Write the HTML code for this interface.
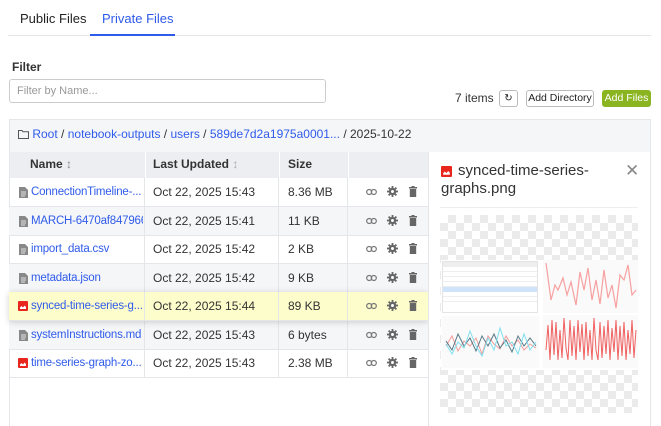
<!DOCTYPE html>
<html><head><meta charset="utf-8"><style>
*{box-sizing:border-box;margin:0;padding:0}
body{width:661px;height:426px;overflow:hidden;background:#fff;font-family:"Liberation Sans",sans-serif;font-size:12px;color:#333;position:relative}
.abs{position:absolute}
.tab{position:absolute;top:11px;font-size:13px}
a{color:#2f5bea;text-decoration:none}
.btn{position:absolute;top:90px;height:17px;border:1px solid #bbb;border-radius:3px;font-size:10.5px;line-height:15px;text-align:center;background:#fff;color:#222;white-space:nowrap;overflow:hidden}
.row{position:absolute;left:9px;width:419px;height:29px;border-bottom:1px solid #e4e6ea;line-height:28px}
.row span{position:absolute;white-space:nowrap}
.c1{left:22px;font-size:11.5px;letter-spacing:-0.2px;width:112px;overflow:hidden}.c2{left:144px;color:#333}.c3{left:279px;color:#333}
.alt{background:#f5f6f8}
.hl{background:#fdfccb;box-shadow:0 1px 6px rgba(0,0,0,.18);z-index:2}
.vl{position:absolute;top:0;bottom:0;width:1px;background:#e4e6ea}
.ic{position:absolute;top:9px}
.chk{background-color:#fff;background-image:conic-gradient(#ebebeb 25%,#fff 0 50%,#ebebeb 0 75%,#fff 0);background-size:16px 16px}
</style></head><body>
<svg width="0" height="0" style="position:absolute">
<defs>
<symbol id="doc" viewBox="0 0 9 11"><path d="M0 0h6l3 3v8H0z" fill="#888"/><path d="M2 5h5M2 7h5M2 9h4" stroke="#fff" stroke-width=".8"/></symbol>
<symbol id="img" viewBox="0 0 10 10"><rect width="10" height="10" rx="1" fill="#e8261e"/><path d="M2 8V6.5l1.5-1.5 1.5 1.5 1.5-2 1.5 1.5V8z" fill="#fff"/></symbol>
<symbol id="lnk" viewBox="0 0 11 8"><rect x=".7" y="1.5" width="5" height="5" rx="2.5" fill="none" stroke="#777" stroke-width="1.2"/><rect x="5.3" y="1.5" width="5" height="5" rx="2.5" fill="none" stroke="#777" stroke-width="1.2"/></symbol>
<symbol id="gear" viewBox="0 0 12 12"><g fill="#666"><circle cx="6" cy="6" r="4"/><rect x="5" y="0" width="2" height="12"/><rect x="0" y="5" width="12" height="2"/><rect x="5" y="0" width="2" height="12" transform="rotate(45 6 6)"/><rect x="5" y="0" width="2" height="12" transform="rotate(-45 6 6)"/></g><circle cx="6" cy="6" r="1.6" fill="#fff"/></symbol>
<symbol id="trash" viewBox="0 0 8 11"><rect x="0" y="1" width="8" height="1.5" fill="#666"/><rect x="2.5" y="0" width="3" height="1.5" fill="#666"/><rect x=".8" y="3" width="6.4" height="8" fill="#666"/></symbol>
</defs></svg>

<div class="tab" style="left:20px;color:#222">Public Files</div>
<div class="tab" style="left:102px;color:#2f5bea">Private Files</div>
<div class="abs" style="left:8px;top:35px;width:643px;height:1px;background:#e6e6e6"></div>
<div class="abs" style="left:90px;top:34px;width:85px;height:2px;background:#2f5bea"></div>

<div class="abs" style="left:12px;top:60px;font-weight:bold;font-size:12px;color:#333">Filter</div>
<div class="abs" style="left:9px;top:79px;width:317px;height:24px;border:1px solid #ccc;border-radius:3px;padding-left:7px;line-height:22px;font-size:11px;color:#999">Filter by Name...</div>

<div class="abs" style="left:455px;top:91px;font-size:12px;color:#333">7 items</div>
<div class="btn" style="left:499px;width:19px;font-size:10px">&#x21bb;</div>
<div class="btn" style="left:526px;width:68px">Add Directory</div>
<div class="btn" style="left:602px;width:49px;background:#8ab520;border-color:#8ab520;color:#fff">Add Files</div>

<div class="abs" style="left:9px;top:119px;width:642px;height:307px;border:1px solid #e4e6ea;border-bottom:none"></div>
<div class="abs" style="left:10px;top:120px;width:640px;height:32px;background:#f5f6f8;line-height:29px;padding-left:8px;white-space:nowrap;font-size:12px">
<svg width="11" height="9" viewBox="0 0 11 9" style="vertical-align:-1px"><path d="M.5 .5h3.5l1 1.2h5.5v6.8H.5z" fill="none" stroke="#555"/></svg>
<a>Root</a> / <a>notebook-outputs</a> / <a>users</a> / <a>589de7d2a1975a0001...</a> / 2025-10-22</div>

<div class="abs" style="left:10px;top:152px;width:418px;height:26px;background:#eceef1;font-weight:bold;line-height:24px">
<span class="abs" style="left:20px">Name <span style="color:#888;font-weight:normal">&#x2195;</span></span>
<span class="abs" style="left:143px">Last Updated <span style="color:#aaa;font-weight:normal">&#x2195;</span></span>
<span class="abs" style="left:278px">Size</span>
<div class="vl" style="left:135px;background:#fff"></div><div class="vl" style="left:269px;background:#fff"></div><div class="vl" style="left:338px;background:#fff"></div>
</div>

<div class="row" style="top:178px"><svg class="ic" width="9" height="11" style="left:10px"><use href="#doc"/></svg><span class="c1"><a>ConnectionTimeline-...</a></span><span class="c2">Oct 22, 2025 15:43</span><span class="c3">8.36 MB</span><div class="vl" style="left:135px"></div><div class="vl" style="left:269px"></div><div class="vl" style="left:338px"></div><svg class="ic" style="left:357px;top:10px" width="11" height="8"><use href="#lnk"/></svg><svg class="ic" style="left:378px;top:8px" width="11" height="11"><use href="#gear"/></svg><svg class="ic" style="left:400px;top:8px" width="8" height="11"><use href="#trash"/></svg></div>

<div class="row alt" style="top:206.5px"><svg class="ic" width="9" height="11" style="left:10px"><use href="#doc"/></svg><span class="c1"><a>MARCH-6470af847966...</a></span><span class="c2">Oct 22, 2025 15:41</span><span class="c3">11 KB</span><div class="vl" style="left:135px"></div><div class="vl" style="left:269px"></div><div class="vl" style="left:338px"></div><svg class="ic" style="left:357px;top:10px" width="11" height="8"><use href="#lnk"/></svg><svg class="ic" style="left:378px;top:8px" width="11" height="11"><use href="#gear"/></svg><svg class="ic" style="left:400px;top:8px" width="8" height="11"><use href="#trash"/></svg></div>

<div class="row" style="top:235px"><svg class="ic" width="9" height="11" style="left:10px"><use href="#doc"/></svg><span class="c1"><a>import_data.csv</a></span><span class="c2">Oct 22, 2025 15:42</span><span class="c3">2 KB</span><div class="vl" style="left:135px"></div><div class="vl" style="left:269px"></div><div class="vl" style="left:338px"></div><svg class="ic" style="left:357px;top:10px" width="11" height="8"><use href="#lnk"/></svg><svg class="ic" style="left:378px;top:8px" width="11" height="11"><use href="#gear"/></svg><svg class="ic" style="left:400px;top:8px" width="8" height="11"><use href="#trash"/></svg></div>

<div class="row alt" style="top:263.5px"><svg class="ic" width="9" height="11" style="left:10px"><use href="#doc"/></svg><span class="c1"><a>metadata.json</a></span><span class="c2">Oct 22, 2025 15:42</span><span class="c3">9 KB</span><div class="vl" style="left:135px"></div><div class="vl" style="left:269px"></div><div class="vl" style="left:338px"></div><svg class="ic" style="left:357px;top:10px" width="11" height="8"><use href="#lnk"/></svg><svg class="ic" style="left:378px;top:8px" width="11" height="11"><use href="#gear"/></svg><svg class="ic" style="left:400px;top:8px" width="8" height="11"><use href="#trash"/></svg></div>

<div class="row hl" style="top:292px"><svg class="ic" width="10" height="10" style="left:9px"><use href="#img"/></svg><span class="c1"><a>synced-time-series-g...</a></span><span class="c2">Oct 22, 2025 15:44</span><span class="c3">89 KB</span><div class="vl" style="left:135px"></div><div class="vl" style="left:269px"></div><div class="vl" style="left:338px"></div><svg class="ic" style="left:357px;top:10px" width="11" height="8"><use href="#lnk"/></svg><svg class="ic" style="left:378px;top:8px" width="11" height="11"><use href="#gear"/></svg><svg class="ic" style="left:400px;top:8px" width="8" height="11"><use href="#trash"/></svg></div>

<div class="row alt" style="top:320.5px"><svg class="ic" width="9" height="11" style="left:10px"><use href="#doc"/></svg><span class="c1"><a>systemInstructions.md</a></span><span class="c2">Oct 22, 2025 15:43</span><span class="c3">6 bytes</span><div class="vl" style="left:135px"></div><div class="vl" style="left:269px"></div><div class="vl" style="left:338px"></div><svg class="ic" style="left:357px;top:10px" width="11" height="8"><use href="#lnk"/></svg><svg class="ic" style="left:378px;top:8px" width="11" height="11"><use href="#gear"/></svg><svg class="ic" style="left:400px;top:8px" width="8" height="11"><use href="#trash"/></svg></div>

<div class="row" style="top:349px"><svg class="ic" width="10" height="10" style="left:9px"><use href="#img"/></svg><span class="c1"><a>time-series-graph-zo...</a></span><span class="c2">Oct 22, 2025 15:43</span><span class="c3">2.38 MB</span><div class="vl" style="left:135px"></div><div class="vl" style="left:269px"></div><div class="vl" style="left:338px"></div><svg class="ic" style="left:357px;top:10px" width="11" height="8"><use href="#lnk"/></svg><svg class="ic" style="left:378px;top:8px" width="11" height="11"><use href="#gear"/></svg><svg class="ic" style="left:400px;top:8px" width="8" height="11"><use href="#trash"/></svg></div>

<div class="abs" style="left:428px;top:152px;width:222px;height:274px;background:#fff;border-left:1px solid #e4e6ea;z-index:3"></div>
<div class="abs" style="z-index:4;left:0;top:0">
<svg class="abs" style="left:441px;top:166px" width="11" height="11"><use href="#img"/></svg>
<div class="abs" style="left:441px;top:162px;font-size:15px;line-height:18px;color:#333;width:170px;text-indent:17px">synced-time-series-graphs.png</div>
<div class="abs" style="left:625px;top:161px;font-size:17px;color:#888">&#x2715;</div>
<div class="abs" style="left:440px;top:207px;width:198px;height:1px;background:#eee"></div>
<div class="abs chk" style="left:440px;top:215px;width:198px;height:198px"></div>
<div class="abs" style="left:441px;top:260px;width:197px;height:110px;background:#fff">
 <div class="abs" style="left:1px;top:1px;width:96px;height:52px;border:1px solid #e4e4e4;background:#fff">
  <div style="height:5px;background:#eee"></div>
  <div style="height:5px;border-bottom:1px solid #eee"></div><div style="height:5px;border-bottom:1px solid #eee"></div><div style="height:5px;border-bottom:1px solid #eee"></div><div style="height:5px;border-bottom:1px solid #eee"></div><div style="height:5px;background:#cfe3fb"></div><div style="height:5px;border-bottom:1px solid #eee"></div><div style="height:5px;border-bottom:1px solid #eee"></div><div style="height:5px"></div>
 </div>
 <svg class="abs" style="left:102px;top:0" width="95" height="108" viewBox="0 0 95 108">
  <rect x="0" y="0" width="95" height="53" fill="#fafafa"/><rect x="0" y="55" width="95" height="53" fill="#fafafa"/>
  <polyline fill="none" stroke="#f7a0a0" stroke-width="1.2" points="3,3 8,40 12,25 15,30 20,18 24,35 28,22 33,45 37,12 41,30 45,8 49,40 53,20 57,44 61,10 65,38 69,25 73,48 77,15 81,20 85,5 89,35 93,30"/>
  <polyline fill="none" stroke="#f06060" stroke-width="1" points="3,90 5,65 7,100 9,60 11,95 13,62 15,100 17,70 19,98 21,58 23,88 25,100 27,60 29,96 31,66 33,100 35,60 37,92 39,64 41,100 43,62 45,96 47,70 49,100 51,58 53,90 55,100 57,62 59,98 61,66 63,94 65,60 67,100 69,68 71,92 73,60 75,100 77,66 79,96 81,62 83,100 85,70 87,94 89,60 91,98 93,70"/>
 </svg>
 <svg class="abs" style="left:1px;top:56px" width="97" height="52" viewBox="0 0 97 52">
  <rect width="97" height="52" fill="#fafafa"/>
  <polyline fill="none" stroke="#f59a9a" stroke-width="1" points="4,30 10,20 16,35 22,25 28,30 34,22 40,38 46,20 52,28 58,33 64,20 70,30 76,24 82,34 88,28 94,32"/>
  <polyline fill="none" stroke="#577a88" stroke-width="1" points="4,25 10,34 16,18 22,30 28,22 34,35 40,20 46,30 52,18 58,32 64,24 70,36 76,20 82,30 88,22 94,30"/>
  <polyline fill="none" stroke="#7fe0ee" stroke-width="1" points="4,28 10,38 16,26 22,32 28,15 34,30 40,40 46,22 52,34 58,12 64,30 70,26 76,38 82,18 88,34 94,26"/>
 </svg>
</div>
</div>
</body></html>
